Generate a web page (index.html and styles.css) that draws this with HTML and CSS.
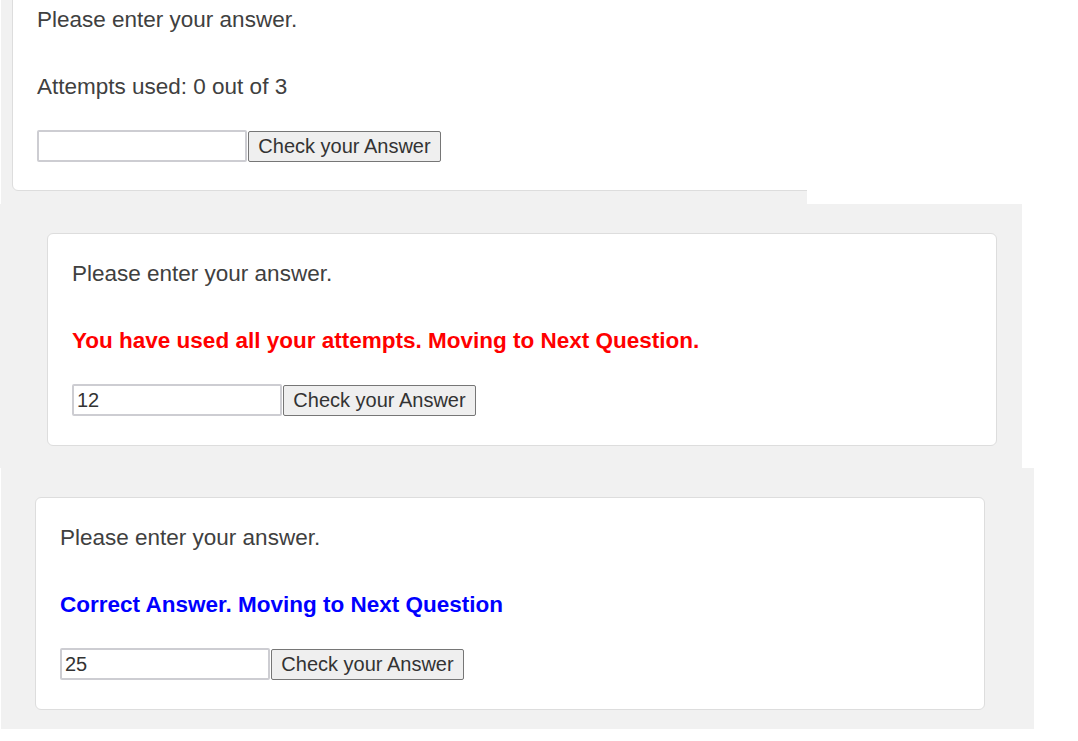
FILE: index.html
```html
<!DOCTYPE html>
<html lang="en">
<head>
<meta charset="utf-8">
<title>Quiz answers</title>
<link rel="stylesheet" href="styles.css">
</head>
<body>
  <section class="shot shot-one">
    <div class="card card-top">
      <p class="line">Please enter your answer.</p>
      <p class="line status">Attempts used: 0 out of 3</p>
      <form class="answer-row">
        <input class="answer" type="text" value="">
        <button class="check" type="button">Check your Answer</button>
      </form>
    </div>
  </section>
  <section class="shot shot-two">
    <div class="card">
      <p class="line">Please enter your answer.</p>
      <p class="line status status-fail">You have used all your attempts. Moving to Next Question.</p>
      <form class="answer-row">
        <input class="answer" type="text" value="12">
        <button class="check" type="button">Check your Answer</button>
      </form>
    </div>
  </section>
  <section class="shot shot-three">
    <div class="card">
      <p class="line">Please enter your answer.</p>
      <p class="line status status-ok">Correct Answer. Moving to Next Question</p>
      <form class="answer-row">
        <input class="answer" type="text" value="25">
        <button class="check" type="button">Check your Answer</button>
      </form>
    </div>
  </section>
</body>
</html>
```

FILE: styles.css
```css
* {
  box-sizing: border-box;
}

html, body {
  margin: 0;
  padding: 0;
  background: #ffffff;
}

body {
  font-family: "Liberation Sans", Arial, sans-serif;
  color: #404040;
}

.shot {
  background: #f1f1f1;
  overflow: hidden;
}

.shot-one {
  width: 806px;
  height: 204px;
  margin-left: 1px;
  padding-left: 11px;
}

.shot-two {
  width: 1022px;
  height: 264px;
  padding-top: 29px;
  padding-left: 47px;
}

.shot-three {
  width: 1033px;
  height: 261px;
  margin-left: 1px;
  padding-top: 29px;
  padding-left: 34px;
}

.card {
  width: 950px;
  background: #ffffff;
  border: 1px solid #dddddd;
  border-radius: 6px;
  padding: 27px 24px 29px 24px;
}

.card-top {
  margin-top: -21px;
  width: 900px;
  padding-bottom: 28px;
}

.line {
  margin: 0;
  font-size: 22.5px;
  line-height: 26px;
  white-space: nowrap;
}

.status {
  margin-top: 41px;
}

.status-fail {
  color: #ff0000;
  font-weight: bold;
}

.status-ok {
  color: #0000ff;
  font-weight: bold;
}

.answer-row {
  display: flex;
  align-items: center;
  margin: 30px 0 0 0;
  height: 32px;
}

.answer {
  width: 210px;
  height: 32px;
  margin: 0 1px 0 0;
  padding: 0 3px;
  border: 2px solid #cdcdd2;
  border-radius: 2px;
  background: #ffffff;
  font-family: "Liberation Sans", Arial, sans-serif;
  font-size: 20px;
  color: #333333;
}

.check {
  width: 193px;
  height: 31px;
  margin: 0;
  padding: 0;
  border: 1px solid #767676;
  border-radius: 2px;
  background: #efefef;
  font-family: "Liberation Sans", Arial, sans-serif;
  font-size: 20px;
  color: #333333;
}
```
